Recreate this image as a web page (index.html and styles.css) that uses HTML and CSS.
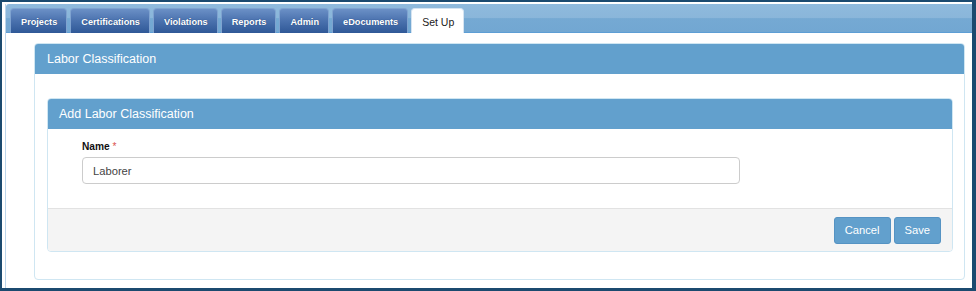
FILE: index.html
```html
<!DOCTYPE html>
<html>
  <head>
    <title>Labor Classification</title>
    <link rel="stylesheet" href="styles.css">
  </head>
  <body>
    <div class="frame">
      <div class="app">
        <!-- Main navigation tabs -->
        <nav class="tabbar">
          <a class="tab" href="#">Projects</a>
          <a class="tab" href="#">Certifications</a>
          <a class="tab" href="#">Violations</a>
          <a class="tab" href="#">Reports</a>
          <a class="tab" href="#">Admin</a>
          <a class="tab" href="#">eDocuments</a>
          <a class="tab active" href="#">Set Up</a>
        </nav>

        <div class="content">
          <div class="panel">
            <div class="panel-heading">Labor Classification</div>
            <div class="panel-body">
              <!-- Add form -->
              <div class="panel inner">
                <div class="panel-heading">Add Labor Classification</div>
                <div class="form-body">
                  <label class="field-label" for="name">Name <span class="required">*</span></label>
                  <input id="name" class="field-input" type="text" value="Laborer">
                </div>
                <div class="panel-footer">
                  <button class="btn">Cancel</button>
                  <button class="btn">Save</button>
                </div>
              </div>
            </div>
          </div>
        </div>
      </div>
    </div>
  </body>
</html>
```

FILE: styles.css
```css
html, body {
  margin: 0;
  padding: 0;
}
body {
  font-family: "Liberation Sans", Arial, sans-serif;
  background: #fff;
}
.frame {
  width: 976px;
  height: 291px;
  box-sizing: border-box;
  border-style: solid;
  border-color: #1b4a6f;
  border-width: 2px 4px 3px 2px;
  padding: 2px 0 0 3px;
  background: #fff;
  display: flex;
}
.app {
  flex: 1;
  border-left: 1px solid #bcd5ea;
  display: flex;
  flex-direction: column;
}

/* Tabs */
.tabbar {
  height: 29px;
  box-sizing: border-box;
  display: flex;
  align-items: flex-end;
  gap: 3px;
  padding-left: 4px;
  border-bottom: 1px solid #5d9ed5;
  border-top-left-radius: 3px;
  background: linear-gradient(to bottom, #8fbadd 0%, #8ab6da 50%, #75a9d3 52%, #72a7d2 100%);
}
.tab {
  height: 25px;
  box-sizing: border-box;
  margin-bottom: -1px;
  padding: 1px 9px 0 10px;
  display: flex;
  align-items: center;
  border: 1px solid #7fa3d0;
  border-bottom: none;
  border-radius: 4px 4px 0 0;
  background: linear-gradient(to bottom, #6b90c6 0%, #4d74b0 45%, #2f5897 100%);
  color: #fff;
  font-size: 9.2px;
  font-weight: bold;
  text-decoration: none;
  text-shadow: 0 0 1px #1e3f72;
}
.tab.active {
  background: #fff;
  border-color: #d6e4f1;
  color: #1a1a1a;
  text-shadow: none;
  font-weight: normal;
  font-size: 10.5px;
  padding: 1px 9px 0 10px;
}

/* Panels */
.content {
  flex: 1;
  padding: 10px 7px 0 28px;
}
.panel {
  border: 1px solid #cfe6f2;
  border-radius: 4px;
  background: #fff;
}
.panel-heading {
  height: 30px;
  box-sizing: border-box;
  padding-left: 12px;
  display: flex;
  align-items: center;
  background: #62a0cd;
  color: #fff;
  font-size: 12.5px;
  border-radius: 3px 3px 0 0;
}
.panel-body {
  padding: 24px 11px 27px 12px;
}
.inner .panel-heading {
  padding-left: 11px;
}
.form-body {
  padding: 11px 35px 24px 34px;
}
.field-label {
  display: block;
  font-size: 10.2px;
  line-height: 14px;
  font-weight: bold;
  color: #111;
  margin-bottom: 3px;
}
.required {
  color: #d9534f;
  font-weight: normal;
}
.field-input {
  display: block;
  width: 658px;
  height: 27px;
  box-sizing: border-box;
  border: 1px solid #cccccc;
  border-radius: 4px;
  padding: 0 10px;
  font-family: inherit;
  font-size: 11.2px;
  color: #444;
}
.panel-footer {
  height: 43px;
  box-sizing: border-box;
  border-top: 1px solid #e2e2e2;
  background: #f4f4f4;
  display: flex;
  justify-content: flex-end;
  align-items: center;
  gap: 3px;
  padding: 0 11px 0 0;
  border-radius: 0 0 3px 3px;
}
.btn {
  height: 27px;
  padding: 0 10px;
  border: 1px solid #5593c3;
  border-radius: 3px;
  background: #62a0cd;
  color: #fff;
  font-family: inherit;
  font-size: 11.2px;
}
```
